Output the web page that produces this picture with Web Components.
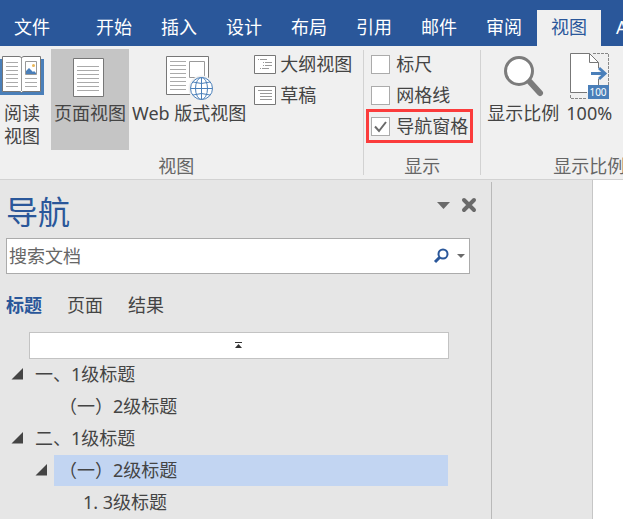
<!DOCTYPE html>
<html lang="zh-CN">
<head>
<meta charset="utf-8">
<title>Word - 视图</title>
<style>
    body {
        margin:         0;
        min-height:     100vh;
        display:        flex;
        flex-direction: column;
        overflow:       hidden;
        background:     #e6e6e6;
        color:          #444;
        font-family:    "Noto Sans", "Noto Sans CJK SC", sans-serif;
        font-size:      18px;
        line-height:    24px;
    }
</style>
</head>
<body>

<ribbon-tabs>
    <ribbon-tab file>文件</ribbon-tab>
    <ribbon-tab>开始</ribbon-tab>
    <ribbon-tab>插入</ribbon-tab>
    <ribbon-tab>设计</ribbon-tab>
    <ribbon-tab>布局</ribbon-tab>
    <ribbon-tab>引用</ribbon-tab>
    <ribbon-tab>邮件</ribbon-tab>
    <ribbon-tab>审阅</ribbon-tab>
    <ribbon-tab active>视图</ribbon-tab>
    <ribbon-tab>A</ribbon-tab>
</ribbon-tabs>

<ribbon-bar>
    <ribbon-group label="视图">
        <large-button class="reading">
            <svg slot="icon" width="44" height="47" viewBox="0 0 44 47">
                <path fill="#4a7fb9" d="M0 4h44v36H0z"/>
                <path fill="#fff" stroke="#777" d="M2.500 1.500H19q2 0 2.500 1.500q.5-1.500 2.500-1.500h16.500v35H24q-2 0-2.500 1q-.5-1-2.500-1H2.500z"/>
                <path stroke="#999" d="M21.500 3v33"/>
                <path stroke="#aaa" d="M6 7.500h12M6 11.500h12M6 15.500h12M6 19.500h12M6 23.500h12M6 27.500h12M6 31.500h12M25 23.500h12M25 27.500h12M25 31.500h12"/>
                <path fill="#fff" stroke="#999" d="M25.500 6.500h11v13h-11z"/>
                <circle cx="33.500" cy="10.500" r="1.500" fill="#eab656"/>
                <path fill="#4a7fb9" d="M26 19v-3l3-3 4 4 1-1 2 2v1z"/>
            </svg>
            阅读<br>视图
        </large-button>
        <large-button active>
            <svg slot="icon" width="48" height="47" viewBox="0 0 48 47">
                <path fill="#fff" stroke="#777" d="M7.500 3.500h30v38h-30z"/>
                <path stroke="#aaa" d="M11 11.500h22M11 15.500h22M11 19.500h22M11 23.500h22M11 27.500h22M11 31.500h22M11 35.500h22"/>
            </svg>
            页面视图
        </large-button>
        <large-button>
            <svg slot="icon" width="48" height="47" viewBox="0 0 48 47">
                <path fill="#fff" stroke="#777" d="M1.500 1.500h42v38h-42z"/>
                <path stroke="#aaa" d="M5 6.500h16M5 10.500h16M5 14.500h16M5 18.500h16M5 22.500h16M5 26.500h16M5 30.500h16M5 34.500h16"/>
                <path fill="#fff" stroke="#999" d="M24.500 6.500h15v16h-15z"/>
                <circle cx="36.500" cy="33.500" r="13" fill="#f0f0f0"/>
                <g fill="#fff" stroke="#4a7fb9">
                    <circle cx="36.500" cy="33.500" r="11"/>
                    <ellipse cx="36.500" cy="33.500" rx="6" ry="11"/>
                    <path fill="none" d="M36.500 22.500v22M25.500 33.500h22M28 27q8.500 3 17 0M28 40q8.500-3 17 0"/>
                </g>
            </svg>
            Web 版式视图
        </large-button>
        <button-stack>
            <small-button>
                <svg slot="icon" width="22" height="19" viewBox="0 0 22 19">
                    <path fill="#fff" stroke="#777" d="M.5.5h21v18H.5z"/>
                    <path stroke="#999" d="M4 4.500h1M6 4.500h7M9 7.500h1M11 7.500h7M9 10.500h1M11 10.500h7M6 13.500h1M8 13.500h7"/>
                </svg>
                大纲视图
            </small-button>
            <small-button>
                <svg slot="icon" width="22" height="19" viewBox="0 0 22 19">
                    <path fill="#fff" stroke="#777" d="M.5.5h21v18H.5z"/>
                    <path stroke="#999" d="M4 4.500h14M6 7.500h12M6 10.500h12M6 13.500h12"/>
                </svg>
                草稿
            </small-button>
        </button-stack>
    </ribbon-group>
    <ribbon-separator></ribbon-separator>
    <ribbon-group label="显示" class="show">
        <button-stack>
            <check-option>标尺</check-option>
            <check-option>网格线</check-option>
            <check-option checked marked>导航窗格</check-option>
        </button-stack>
    </ribbon-group>
    <ribbon-separator></ribbon-separator>
    <ribbon-group label="显示比例" class="zoom">
        <large-button>
            <svg slot="icon" width="48" height="47" viewBox="0 0 48 47">
                <path stroke="#7c7c7c" stroke-width="6" stroke-linecap="round" d="M31 27l10 11"/>
                <circle cx="20" cy="16" r="13.500" fill="#fff" stroke="#7c7c7c" stroke-width="3"/>
            </svg>
            显示比例
        </large-button>
        <large-button>
            <svg slot="icon" width="40" height="47" viewBox="0 0 40 47" overflow="visible">
                <path fill="none" stroke="#888" stroke-dasharray="3 1" d="M24 -1.500h15.500V31M1.500 40v3.500H18"/>
                <path fill="#fff" d="M1.500-1.500h19l9 9v30h-28z"/>
                <path fill="none" stroke="#777" d="M29.500 13V7.500l-9-9h-19v39H18M20.500-1.500v9h9M29.500 24v7"/>
                <path fill="none" stroke="#4a7fb9" stroke-width="3" d="M22 18.500h14M30 13l6 5.500-6 5.500"/>
                <path fill="#4a7fb9" d="M19 30h21v14H19z"/>
                <text x="29" y="41" fill="#fff" font-size="10" text-anchor="middle">100</text>
            </svg>
            100%
        </large-button>
    </ribbon-group>
</ribbon-bar>

<work-area>
    <navigation-pane slot="pane" heading="导航">
        <outline-item level="1" open>一、1级标题</outline-item>
        <outline-item level="2">（一）2级标题</outline-item>
        <outline-item level="1" open>二、1级标题</outline-item>
        <outline-item level="2" open selected>（一）2级标题</outline-item>
        <outline-item level="3">1. 3级标题</outline-item>
    </navigation-pane>
</work-area>

<script>
/**
 * Base class: puts the static template of the subclass in an open shadow root
 */
class BaseElement extends HTMLElement {
    constructor() {
        super();
        const el = document.createElement('template');
        el.innerHTML = BaseElement.reset + this.constructor.template;
        this.attachShadow({ mode: 'open' });
        this.shadowRoot.appendChild(el.content.cloneNode(true));
    }

    static reset = `
    <style>
        * { box-sizing: border-box; }
        button {
            margin:      0;
            padding:     0;
            border:      0;
            background:  none;
            color:       inherit;
            font:        inherit;
            white-space: nowrap;
        }
        svg { display: block; }
    </style>`;

    find(selector) {
        return this.shadowRoot.querySelector(selector);
    }
}

class RibbonTabs extends BaseElement {
    static tag = "ribbon-tabs";
    static template = `
    <style>
        :host {
            display:     block;
            background:  #2a579a;
            color:       #fff;
            padding-top: 10px;
        }
        nav {
            display:  flex;
            gap:      1px;
            height:   36px;
            overflow: hidden;
        }
    </style>
    <nav><slot></slot></nav>`;
}

class RibbonTab extends BaseElement {
    static tag = "ribbon-tab";
    static template = `
    <style>
        :host         { display: flex; flex: none; }
        button        { padding: 0 14px 2px; }
        :host([file]) { margin-right: 17px; }
        :host([active]) {
            background: #f0f0f0;
            color:      #2a579a;
        }
    </style>
    <button><slot></slot></button>`;
}

class RibbonBar extends BaseElement {
    static tag = "ribbon-bar";
    static template = `
    <style>
        :host {
            display:       flex;
            padding:       3px 0 1px;
            overflow:      hidden;
            background:    #f0f0f0;
            border-bottom: 1px solid #d2d2d2;
        }
    </style>
    <slot></slot>`;
}

class RibbonSeparator extends BaseElement {
    static tag = "ribbon-separator";
    static template = `
    <style>
        :host {
            flex:       none;
            width:      1px;
            margin:     1px 0 3px;
            background: #d2d2d2;
        }
    </style>`;
}

class RibbonGroup extends BaseElement {
    static tag = "ribbon-group";
    static template = `
    <style>
        :host {
            display:        flex;
            flex:           none;
            flex-direction: column;
        }
        .items {
            display:       flex;
            min-height:    101px;
            padding-right: 11px;
        }
        .label {
            margin-top:    4px;
            padding-right: 11px;
            text-align:    center;
            color:         #666;
        }
        :host(.show) .items { padding: 0 12px 0 7px; }
        :host(.show) .label { padding: 0; }
        :host(.zoom)        { min-width: 216px; }
        :host(.zoom) .items { padding: 0 3px; gap: 1px; }
        :host(.zoom) .label { padding: 0; }
    </style>
    <div class="items"><slot></slot></div>
    <div class="label"></div>`;

    connectedCallback() {
        this.find('.label').innerText = this.getAttribute('label');
    }
}

class LargeButton extends BaseElement {
    static tag = "large-button";
    static template = `
    <style>
        :host { display: flex; }
        button {
            display:        flex;
            flex-direction: column;
            align-items:    center;
            padding:        6px 3px 0;
            line-height:    23px;
        }
        :host(.reading) button { padding: 6px 7px 0 0; }
        :host([active]) button { background: #c5c5c5; }
    </style>
    <button>
        <slot name="icon"></slot>
        <span><slot></slot></span>
    </button>`;
}

class ButtonStack extends BaseElement {
    static tag = "button-stack";
    static template = `
    <style>
        :host {
            display:        flex;
            flex-direction: column;
            gap:            7px;
            padding-top:    3px;
        }
    </style>
    <slot></slot>`;
}

class SmallButton extends BaseElement {
    static tag = "small-button";
    static template = `
    <style>
        :host  { display: flex; padding-left: 5px; }
        button {
            display:     flex;
            align-items: center;
            gap:         4px;
        }
    </style>
    <button><slot name="icon"></slot><span><slot></slot></span></button>`;
}

class CheckOption extends BaseElement {
    static tag = "check-option";
    static template = `
    <style>
        :host { display: block; }
        label {
            display:     flex;
            align-items: center;
            gap:         6px;
            white-space: nowrap;
        }
        .box { display: grid; }
        .box > * { grid-area: 1 / 1; }
        input {
            appearance: none;
            width:      19px;
            height:     19px;
            margin:     0;
            border:     1px solid #ababab;
            background: #fff;
        }
        svg { visibility: hidden; pointer-events: none; }
        input:checked + svg { visibility: visible; }
        :host([marked]) {
            outline:        3px solid #fb3c3c;
            outline-offset: 2px;
        }
    </style>
    <label>
        <span class="box">
            <input type="checkbox">
            <svg width="19" height="19"><path d="M4 9.500l4 4.500 7-9" fill="none" stroke="#6a6a6a" stroke-width="2"/></svg>
        </span>
        <span><slot></slot></span>
    </label>`;

    connectedCallback() {
        this.find('input').checked = this.hasAttribute('checked');
    }
}

class WorkArea extends BaseElement {
    static tag = "work-area";
    static template = `
    <style>
        :host {
            display:               grid;
            flex:                  1;
            grid-template-columns: minmax(0, 492px) 1fr;
        }
        .page {
            margin-left: 100px;
            border-left: 1px solid #c6c6c6;
            background:  #fff;
        }
    </style>
    <slot name="pane"></slot>
    <main class="page"></main>`;
}

class NavigationPane extends BaseElement {
    static tag = "navigation-pane";
    static template = `
    <style>
        :host {
            display:      block;
            margin-top:   2px;
            padding:      10px 21px 0 6px;
            border-right: 1px solid #b9b9b9;
        }
        header {
            display:         flex;
            justify-content: space-between;
        }
        h1 {
            margin:      0;
            color:       #2a579a;
            font-size:   32px;
            font-weight: 400;
            line-height: 40px;
        }
        .tools {
            display:      flex;
            gap:          10px;
            align-self:   flex-start;
            margin-top:   5px;
            margin-right: -7px;
        }
        .search {
            display:       flex;
            align-items:   center;
            height:        36px;
            margin-top:    6px;
            padding-right: 2px;
            border:        1px solid #ababab;
            background:    #fff;
        }
        input {
            flex:       1;
            min-width:  0;
            padding:    0 2px;
            border:     0;
            outline:    0;
            background: none;
            font:       inherit;
        }
        input::placeholder { color: #666; opacity: 1; }
        .tabs {
            display: flex;
            gap:     25px;
            margin:  19px 0 15px;
        }
        .tabs .active { color: #2a579a; font-weight: 700; }
        .top {
            display:         flex;
            align-items:     center;
            justify-content: center;
            width:           100%;
            height:          27px;
            border:          1px solid #c3c3c3;
            background:      #fff;
        }
        .jump { padding: 0 21px 0 23px; }
        .tree { margin-right: 22px; }
    </style>
    <header>
        <h1></h1>
        <div class="tools">
            <button aria-label="选项"><svg width="15" height="16"><path d="M1 5h13l-6.500 7z" fill="#6a6a6a"/></svg></button>
            <button aria-label="关闭"><svg width="16" height="16"><path d="M3 3l10 10M13 3L3 13" stroke="#6a6a6a" stroke-width="4" stroke-linecap="round"/></svg></button>
        </div>
    </header>
    <div class="search">
        <input type="text" placeholder="搜索文档" aria-label="搜索文档">
        <button aria-label="搜索"><svg width="24" height="20"><circle cx="13" cy="8" r="4.500" fill="none" stroke="#2a579a" stroke-width="2"/><path d="M9.500 11.500L5 16" stroke="#2a579a" stroke-width="3"/></svg></button>
        <button aria-label="搜索选项"><svg width="13" height="20"><path d="M3 8h8l-4 4z" fill="#6a6a6a"/></svg></button>
    </div>
    <div class="tabs">
        <button class="active">标题</button>
        <button>页面</button>
        <button>结果</button>
    </div>
    <div class="jump">
        <button class="top" aria-label="跳转到开头"><svg width="8" height="7"><path d="M0 0h7v1H0zM0 6l3.500-4L7 6z" fill="#333"/></svg></button>
    </div>
    <div class="tree"><slot></slot></div>`;

    connectedCallback() {
        this.find('h1').innerText = this.getAttribute('heading');
    }
}

class OutlineItem extends BaseElement {
    static tag = "outline-item";
    static template = `
    <style>
        :host {
            display:      flex;
            height:       32px;
            padding-left: 5px;
        }
        :host([level="2"]) { padding-left: 29px; }
        :host([level="3"]) { padding-left: 53px; }
        svg {
            flex:       none;
            margin:     9px 7px 0 0;
            visibility: hidden;
        }
        :host([open]) svg { visibility: visible; }
        .text {
            flex:         1;
            height:       31px;
            padding-left: 5px;
            line-height:  31px;
        }
        :host([selected]) .text { background: #c2d5f2; }
    </style>
    <svg width="12" height="12"><path d="M12 0v11.500H.5z" fill="#444"/></svg>
    <div class="text"><slot></slot></div>`;
}

[
    RibbonTabs, RibbonTab, RibbonBar, RibbonSeparator, RibbonGroup, LargeButton,
    ButtonStack, SmallButton, CheckOption, WorkArea, NavigationPane, OutlineItem
].forEach(c => window.customElements.define(c.tag, c));
</script>
</body>
</html>
